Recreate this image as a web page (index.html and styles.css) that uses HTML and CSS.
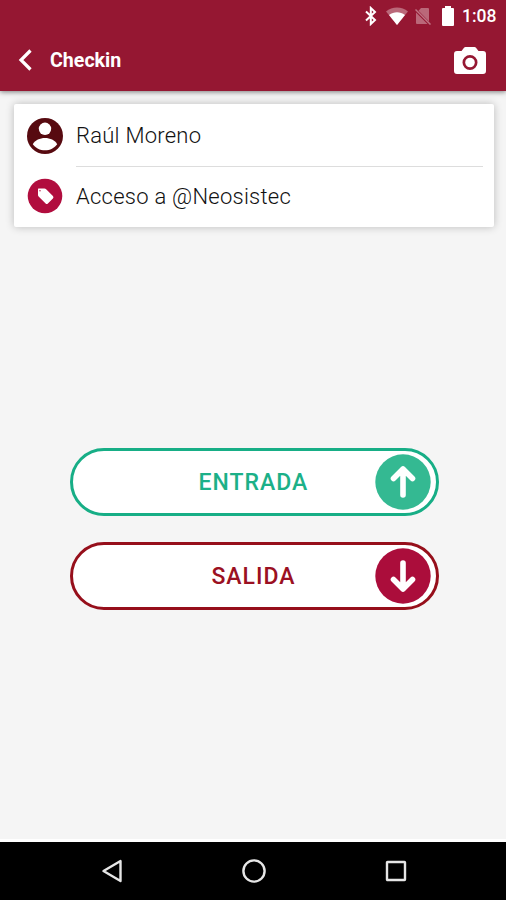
FILE: index.html
```
<!DOCTYPE html>
<html lang="es">
<head>
<meta charset="UTF-8">
<meta name="viewport" content="width=device-width, initial-scale=1.0">
<title>Checkin</title>
<link rel="stylesheet" href="styles.css">
</head>
<body>
  <header class="header">
    <div class="status-bar">
      <svg class="bluetooth" width="12" height="20" viewBox="0 0 12 20"><path d="M1 5.500l9 8.500-4.200 4V2L10 6 1 14.500"/></svg>
      <svg class="wifi" width="22" height="18" viewBox="0 0 22 18"><path class="faded" d="M0 4.500C6-1 16-1 22 4.500L11 18z"/><path d="M3 8C8 4.300 14 4.300 19 8l-8 10z"/></svg>
      <svg class="no-sim" width="16" height="18" viewBox="0 0 16 18"><path class="faded" d="M6 1h7a1 1 0 0 1 1 1v12.500L3.500 3.700zM1 5.500L12.500 17H2a1 1 0 0 1-1-1z"/><path class="slash" d="M.5 2.500l15 15"/></svg>
      <svg class="battery" width="14" height="20" viewBox="0 0 14 20"><path d="M4 0h6v2h2a1 1 0 0 1 1 1v16a1 1 0 0 1-1 1H2a1 1 0 0 1-1-1V3a1 1 0 0 1 1-1h2z"/></svg>
      <span class="time">1:08</span>
    </div>
    <div class="toolbar">
      <svg class="back" width="16" height="24" viewBox="0 0 16 24"><path d="M13.500 2.500L4 12l9.500 9.500"/></svg>
      <h1 class="title">Checkin</h1>
      <svg class="camera" width="32" height="28" viewBox="0 0 32 28"><path fill-rule="evenodd" d="M11.500 0h9a2 2 0 0 1 1.500.700L24.500 4H29a3 3 0 0 1 3 3v17a3 3 0 0 1-3 3H3a3 3 0 0 1-3-3V7a3 3 0 0 1 3-3h4.500L10 .700A2 2 0 0 1 11.500 0zM16 8a7.500 7.500 0 1 0 0 15 7.500 7.500 0 0 0 0-15z"/><circle cx="16" cy="15.500" r="4.800"/></svg>
    </div>
  </header>

  <main class="content">
    <div class="card">
      <div class="row">
        <svg class="row-icon" width="36" height="36" viewBox="0 0 36 36"><circle cx="18" cy="18" r="18" fill="#570a10"/><circle cx="18" cy="10.800" r="6.200" fill="#fff"/><path d="M5.800 26.200C8 22 13 19.900 18 19.900s10 2.100 12.200 6.300C27.500 30 23 32.300 18 32.300S8.500 30 5.800 26.200z" fill="#fff"/></svg>
        <div class="row-text">Raúl Moreno</div>
      </div>
      <div class="row">
        <svg class="row-icon" width="36" height="36" viewBox="0 0 36 36"><circle cx="18" cy="18" r="17.300" fill="#b10d3e"/><path fill-rule="evenodd" d="M11.500 10.500h6a2 2 0 0 1 1.400.600l7 7a1.600 1.600 0 0 1 0 2.300l-5 5a1.600 1.600 0 0 1-2.300 0l-7-7a2 2 0 0 1-.6-1.400v-6a.500.500 0 0 1 .5-.5zm1.500 1.500a.7.700 0 1 0 0 1.400.7.700 0 0 0 0-1.400z" fill="#fff"/></svg>
        <div class="row-text">Acceso a @Neosistec</div>
      </div>
    </div>

    <div class="actions">
      <button class="pill entrada" type="button">
        <span class="label">ENTRADA</span>
        <svg class="arrow" width="56" height="56" viewBox="0 0 56 56"><circle cx="28" cy="28" r="27.700"/><path d="M28 41V15M18.500 24.500L28 15l9.500 9.500"/></svg>
      </button>
      <button class="pill salida" type="button">
        <span class="label">SALIDA</span>
        <svg class="arrow" width="56" height="56" viewBox="0 0 56 56"><circle cx="28" cy="28" r="27.700"/><path d="M28 15v26M18.500 31.500L28 41l9.500-9.500"/></svg>
      </button>
    </div>
  </main>

  <nav class="nav-bar">
    <svg width="24" height="26" viewBox="0 0 24 26"><path d="M20.500 3v20L3.500 13z"/></svg>
    <svg width="24" height="26" viewBox="0 0 24 26"><circle cx="12" cy="13" r="10.600"/></svg>
    <svg width="24" height="26" viewBox="0 0 24 26"><rect x="3" y="4" width="18" height="18" rx=".5"/></svg>
  </nav>
</body>
</html>
```
FILE: styles.css
```
* {
  box-sizing: border-box;
}
body, html {
  margin: 0;
  padding: 0;
  height: 100%;
}
body {
  display: flex;
  flex-direction: column;
  font-family: Roboto, sans-serif;
  background-color: #f5f5f5;
}
.header {
  height: 91px;
  background-color: #951732;
  color: #fff;
  box-shadow: 0 1px 5px rgba(0,0,0,0.5);
}
.status-bar {
  display: flex;
  align-items: center;
  height: 31px;
  padding-left: 365px;
}
.status-bar svg {
  fill: #fff;
  flex-shrink: 0;
}
.status-bar .bluetooth {
  fill: none;
  stroke: #fff;
  stroke-width: 2;
}
.wifi {
  margin-left: 9px;
}
.no-sim {
  margin-left: 7px;
}
.battery {
  margin-left: 10px;
}
.faded {
  opacity: 0.35;
}
.slash {
  stroke: #fff;
  stroke-width: 1.5;
  opacity: 0.4;
}
.time {
  margin-left: 7px;
  font-size: 17.5px;
  font-weight: 500;
}
.toolbar {
  display: flex;
  align-items: center;
  height: 59px;
  padding: 0 20px 0 17px;
}
.back {
  margin-bottom: 2px;
  fill: none;
  stroke: #fff;
  stroke-width: 3.2;
}
.title {
  flex-grow: 1;
  margin: 0 0 0 17px;
  font-size: 19.6px;
  font-weight: bold;
}
.camera {
  fill: #fff;
}
.content {
  flex-grow: 1;
  display: flex;
  flex-direction: column;
  align-items: center;
  padding-left: 2px;
  border-bottom: 3px solid #fff;
}
.card {
  width: 480px;
  height: 123px;
  margin-top: 13px;
  padding: 2px 11px 0 13px;
  background-color: #fff;
  border-radius: 2px;
  box-shadow: 0 0 8px rgba(0,0,0,0.24);
}
.row {
  display: flex;
  align-items: center;
  gap: 13px;
  height: 60px;
}
.row-text {
  flex-grow: 1;
  height: 61px;
  line-height: 61px;
  font-size: 22px;
  font-weight: 300;
  letter-spacing: 0.25px;
  color: #111;
}
.row:first-child .row-text {
  height: 62px;
  border-bottom: 1px solid #ddd;
}
.actions {
  display: flex;
  flex-direction: column;
  gap: 26px;
  margin-top: 221px;
}
.pill {
  display: grid;
  grid-template-columns: 56px 1fr 56px;
  align-items: center;
  width: 369px;
  height: 68px;
  padding: 0 5px 0 4px;
  border: 3px solid;
  border-radius: 34px;
  background-color: #fff;
  font-family: inherit;
  cursor: pointer;
}
.label {
  grid-column: 2;
  font-size: 23px;
  font-weight: 500;
  letter-spacing: 1px;
}
.arrow path {
  fill: none;
  stroke: #fff;
  stroke-width: 5.6;
  stroke-linecap: round;
  stroke-linejoin: round;
}
.entrada {
  border-color: #17ae86;
  color: #1cb088;
}
.entrada circle {
  fill: #34b992;
}
.salida {
  border-color: #960f1b;
  color: #9b1022;
}
.salida circle {
  fill: #ab0d3b;
}
.nav-bar {
  display: flex;
  justify-content: center;
  align-items: center;
  gap: 118px;
  height: 58px;
  padding-left: 2px;
  background-color: #000;
}
.nav-bar svg {
  fill: none;
  stroke: #e6e6e6;
  stroke-width: 2.4;
  stroke-linejoin: round;
}
```
